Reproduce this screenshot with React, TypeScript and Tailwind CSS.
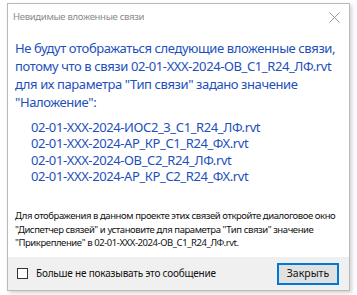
export default function App() {
  const links = [
    "02-01-XXX-2024-ИОС2_3_С1_R24_ЛФ.rvt",
    "02-01-XXX-2024-АР_КР_С1_R24_ФХ.rvt",
    "02-01-XXX-2024-ОВ_С2_R24_ЛФ.rvt",
    "02-01-XXX-2024-АР_КР_С2_R24_ФХ.rvt",
  ]

  return (
    <div className="w-[357px] h-[295px] bg-white overflow-hidden" style={{ fontFamily: '"Noto Sans", sans-serif' }}>
      {/* Dialog window */}
      <div className="ml-[7px] mt-[3px] w-[343px] h-[288px] flex flex-col bg-white border border-[#b9b9b9] shadow-[2px_2px_4px_rgba(0,0,0,0.18)]">
        {/* Title bar */}
        <div className="h-[26px] shrink-0 flex items-center justify-between pl-[5px] pr-[8px]">
          <span className="text-[9.5px] tracking-[-0.3px] text-[#8a8a8a]">Невидимые вложенные связи</span>
          <svg width="11" height="11" viewBox="0 0 11 11" className="mr-[1px]">
            <path d="M0.5 0.5 L10.5 10.5 M10.5 0.5 L0.5 10.5" stroke="#9a9a9a" strokeWidth="1" />
          </svg>
        </div>

        {/* Content */}
        <div className="flex-1 pl-[7px] pr-[4px] whitespace-nowrap">
          <p className="mt-[9px] text-[13px] leading-[18px] text-[#1d50bc] tracking-[-0.4px]">
            Не будут отображаться следующие вложенные связи,
            <br />
            потому что в связи 02-01-XXX-2024-ОВ_С1_R24_ЛФ.rvt
            <br />
            для их параметра "Тип связи" задано значение
            <br />
            "Наложение":
          </p>

          <ul className="mt-[8px] pl-[16px] text-[13px] leading-[16.3px] text-[#1d50bc] tracking-[-0.4px]">
            {links.map((l) => (
              <li key={l}>{l}</li>
            ))}
          </ul>

          <p className="mt-[25px] text-[9.5px] leading-[13.5px] text-[#111] tracking-[-0.42px]">
            Для отображения в данном проекте этих связей откройте диалоговое окно
            <br />
            "Диспетчер связей" и установите для параметра "Тип связи" значение
            <br />
            "Прикрепление" в 02-01-XXX-2024-ОВ_С1_R24_ЛФ.rvt.
          </p>
        </div>

        {/* Footer */}
        <div className="h-[33px] shrink-0 bg-[#f0f0f0] flex items-center justify-between pl-[9px] pr-[10px]">
          <label className="flex items-center gap-[8px]">
            <span className="w-[11px] h-[11px] border border-[#333] bg-white" />
            <span className="text-[10px] tracking-[-0.2px] text-[#111]">Больше не показывать это сообщение</span>
          </label>
          <button className="w-[62px] h-[22px] border border-[#0078d7] bg-[#e1e1e1] text-[10.5px] text-[#111] shadow-[inset_0_0_0_1px_#0078d7]">
            Закрыть
          </button>
        </div>
      </div>
    </div>
  )
}
